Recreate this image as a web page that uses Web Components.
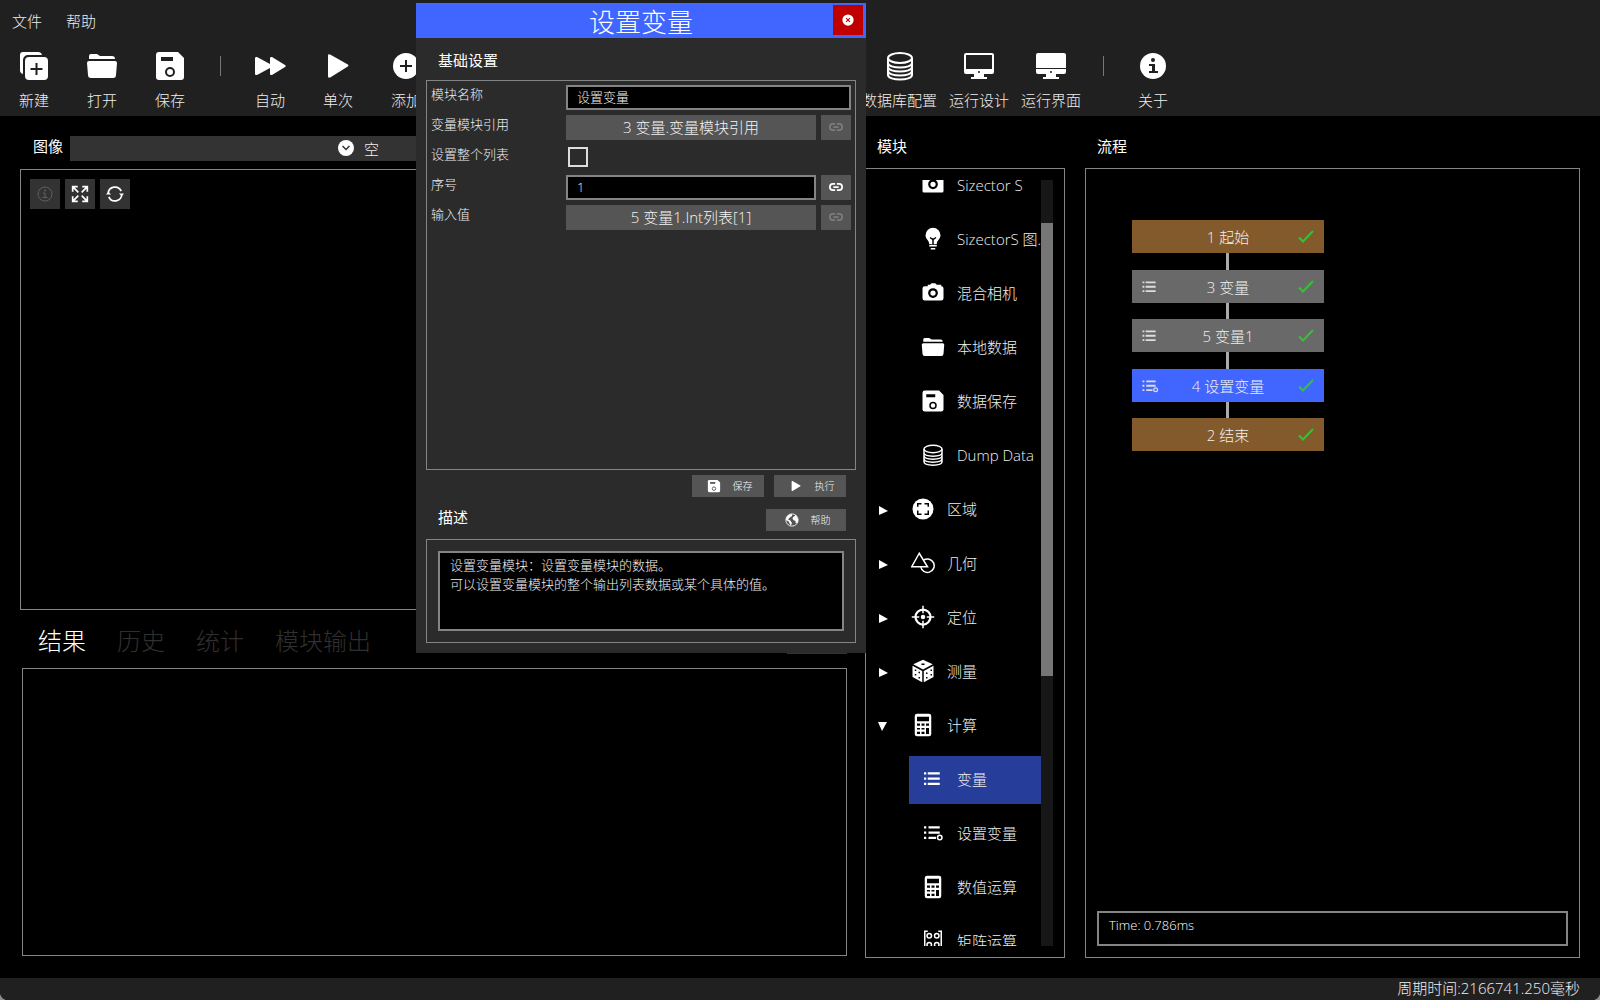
<!DOCTYPE html>
<html lang="zh-CN">
<head>
<meta charset="utf-8">
<title>设置变量</title>
<style>
  html, body {
    height: 100%;
    margin: 0;
    background: #8c8c98;
  }

  body {
    --bar: #202020;
    --line: #848484;
    --accent: #4066ff;
    --button: #555;
    color: #efefef;
    font: 300 15px/20px "Open Sans", "Noto Sans CJK SC", sans-serif;
  }
</style>
</head>
<body>

<app-shell>
  <menu-bar slot="top">
    <a href="#file">文件</a>
    <a href="#help">帮助</a>
  </menu-bar>
  <tool-bar slot="top">
    <tool-item icon="new">新建</tool-item>
    <tool-item icon="folder">打开</tool-item>
    <tool-item icon="save">保存</tool-item>
    <tool-separator></tool-separator>
    <tool-item icon="forward">自动</tool-item>
    <tool-item icon="play">单次</tool-item>
    <tool-item icon="add">添加</tool-item>
    <tool-separator wide></tool-separator>
    <tool-item icon="database">数据库配置</tool-item>
    <tool-item icon="monitor">运行设计</tool-item>
    <tool-item icon="screen">运行界面</tool-item>
    <tool-separator></tool-separator>
    <tool-item icon="info">关于</tool-item>
  </tool-bar>

  <image-view slot="left"></image-view>
  <result-view slot="left"></result-view>

  <module-list slot="modules">
    <module-item icon="cameraflat" child>Sizector S</module-item>
    <module-item icon="bulb" child>SizectorS 图.</module-item>
    <module-item icon="camera" child>混合相机</module-item>
    <module-item icon="folder" child>本地数据</module-item>
    <module-item icon="save" child>数据保存</module-item>
    <module-item icon="database" child>Dump Data</module-item>
    <module-item icon="region">区域</module-item>
    <module-item icon="geometry">几何</module-item>
    <module-item icon="locate">定位</module-item>
    <module-item icon="dice">测量</module-item>
    <module-item icon="calc" open>计算</module-item>
    <module-item icon="list" child selected>变量</module-item>
    <module-item icon="listset" child>设置变量</module-item>
    <module-item icon="calc" child>数值运算</module-item>
    <module-item icon="matrix" child>矩阵运算</module-item>
  </module-list>

  <flow-view slot="flow">
    <flow-node kind="end" style="top: 51px">1 起始</flow-node>
    <flow-node icon="list" style="top: 101px">3 变量</flow-node>
    <flow-node icon="list" style="top: 150px">5 变量1</flow-node>
    <flow-node icon="listset" kind="current" style="top: 200px">4 设置变量</flow-node>
    <flow-node kind="end" style="top: 249px">2 结束</flow-node>
  </flow-view>

  <status-bar slot="status">周期时间:2166741.250毫秒</status-bar>
</app-shell>

<settings-dialog heading="设置变量"></settings-dialog>

<script>
(() => {
  // 32x32 glyphs, --cut is the colour behind the icon
  const ICONS = {
    new: `<path d="M5 2h15a4 4 0 0 1 4 3H10a5 5 0 0 0-5 5v14a4 4 0 0 1-3-4V5a3 3 0 0 1 3-3z"/>
      <rect x="7" y="7" width="23" height="23" rx="4"/>
      <path class="cut-line" d="M18.500 13v12M12.500 19h12" stroke-width="2"/>`,
    folder: `<path d="M3 9V6a2 2 0 0 1 2-2h6l3 2h12a3 3 0 0 1 3 3z"/>
      <path d="M3 11h26a2 2 0 0 1 2 2l-1 12a3 3 0 0 1-3 3H5a3 3 0 0 1-3-3L1 13a2 2 0 0 1 2-2z"/>`,
    save: `<path d="M5 2h19l6 6v19a3 3 0 0 1-3 3H5a3 3 0 0 1-3-3V5a3 3 0 0 1 3-3z"/>
      <path class="cut" d="M7 7h12v4H7z"/><circle class="cut-line" cx="16" cy="22" r="4" stroke-width="2"/>`,
    forward: `<path d="M1 8c0-1 1-1 2-1l13 7V8c0-1 1-1 2-1l13 8c1 1 1 1 0 2l-13 8c-1 0-2 0-2-1v-6L3 25c-1 0-2 0-2-1z"/>`,
    play: `<path d="M6 6c0-2 1-2 3-1l16 9c2 1 2 2 0 3L9 27c-2 1-3 1-3-1z"/>`,
    add: `<circle cx="16" cy="16" r="13"/><path class="cut-line" d="M16 10v12M10 16h12" stroke-width="2"/>`,
    database: `<g class="line" stroke-width="2"><ellipse cx="16" cy="8" rx="12" ry="5"/>
      <path d="M4 8v17c0 6 24 6 24 0V8M4 13c0 6 24 6 24 0M4 17c0 6 24 6 24 0M4 21c0 6 24 6 24 0"/></g>`,
    monitor: `<path fill-rule="evenodd" d="M3 3h26a2 2 0 0 1 2 2v17a2 2 0 0 1-2 2H3a2 2 0 0 1-2-2V5a2 2 0 0 1 2-2zm0 2v14h26V5z"/>
      <path d="M11 24h10v3h3v2H8v-2h3z"/><circle class="cut" cx="16" cy="22" r="1"/>`,
    screen: `<path d="M3 3h26a2 2 0 0 1 2 2v17a2 2 0 0 1-2 2H3a2 2 0 0 1-2-2V5a2 2 0 0 1 2-2z"/>
      <path d="M11 24h10v3h3v2H8v-2h3z"/><path class="cut" d="M1 18h30v1H1z"/><circle class="cut" cx="16" cy="22" r="1"/>`,
    info: `<circle cx="16" cy="16" r="13"/><circle class="cut" cx="16" cy="10" r="2"/>
      <path class="cut" d="M12 14h6v7h3v2h-9v-2h3v-5h-3z"/>`,
    infoline: `<g class="line" stroke-width="2"><circle cx="16" cy="16" r="14"/><path d="M12 14h4v8M11 23h10"/></g>
      <circle cx="16" cy="9" r="2"/>`,
    expand: `<path class="line" stroke-width="3" d="M3 12V3h9M3 3l10 10M20 3h9v9M29 3L19 13M3 20v9h9M3 29l10-10M20 29h9v-9M29 29L19 19"/>`,
    refresh: `<path class="line" stroke-width="3" d="M4 15a12 12 0 0 1 23-4M28 17a12 12 0 0 1-23 4"/>
      <path d="M0 17l4-5 5 5zM23 15l5 5 4-5z"/>`,
    chevron: `<circle cx="16" cy="16" r="16"/><path class="cut-line" d="M9 12l7 7 7-7" stroke-width="3"/>`,
    close: `<circle cx="16" cy="16" r="15"/><path class="cut-line" d="M11 11l10 10M21 11L11 21" stroke-width="3"/>`,
    link: `<path class="line" stroke-width="4" d="M14 9H9a7 7 0 0 0 0 14h5M18 9h5a7 7 0 0 1 0 14h-5M10 16h12"/>`,
    globe: `<circle class="line" cx="16" cy="16" r="14" stroke-width="2"/>
      <path d="M16 2a14 14 0 0 0-14 14l6 3 2 4 3 6 3-6-4-6-5-2 4-5 5-3zM19 9l6-5 5 11-1 8-5-1v-4l-5-2-2-4z"/>`,
    camera: `<path d="M5 7h4V5h3l2-2h5l2 2h6v2a3 3 0 0 1 3 3v13a3 3 0 0 1-3 3H5a3 3 0 0 1-3-3V10a3 3 0 0 1 3-3z"/>
      <circle class="cut-line" cx="16" cy="16" r="5" stroke-width="3"/>`,
    cameraflat: `<path d="M4 5h24a2 2 0 0 1 2 2v17a2 2 0 0 1-2 2H4a2 2 0 0 1-2-2V7a2 2 0 0 1 2-2z"/>
      <circle class="cut-line" cx="16" cy="15" r="5" stroke-width="3"/>`,
    bulb: `<path d="M16 1a10 10 0 0 0-10 10c0 5 5 7 5 12h10c0-5 5-7 5-12A10 10 0 0 0 16 1zM11 24h10v2H11zM13 28h6v2h-6z"/>
      <path class="cut-line" d="M12 14l3 2h2l3-2M16 16v7" stroke-width="2"/>`,
    region: `<circle cx="16" cy="16" r="14"/>
      <path class="cut-line" d="M9 13v-4h5M18 9h5v4M23 18v5h-5M14 23H9v-5" stroke-width="2"/>`,
    geometry: `<g class="line" stroke-width="2"><path d="M11 3L1 21h21z"/><path d="M17 12a9 9 0 1 1-4 9"/></g>`,
    locate: `<g class="line"><circle cx="16" cy="16" r="10" stroke-width="3"/><path stroke-width="2" d="M16 1v10M16 21v10M1 16h10M21 16h10"/></g>
      <circle cx="16" cy="16" r="3"/>`,
    dice: `<path d="M16 1l13 6-13 7L3 7zM2 9l13 7v15L2 24zM30 9l-13 7v15l13-7z"/>
      <path class="cut" d="M14 6h4v2h-4zM5 14h2v2H5zM10 17h2v2h-2zM5 20h2v2H5zM10 24h2v2h-2zM20 18h2v2h-2zM26 14h2v2h-2zM20 24h2v2h-2zM26 20h2v2h-2z"/>`,
    calc: `<rect x="5" y="1" width="22" height="30" rx="3"/>
      <path class="cut" d="M8 5h16v6H8zM8 14h4v3H8zM14 14h4v3h-4zM20 14h4v3h-4zM8 20h4v2H8zM14 20h4v2h-4zM8 25h4v3H8zM14 25h4v3h-4zM20 20h4v8h-4z"/>`,
    list: `<path d="M4 7h3v3H4zM9 7h16v3H9zM4 14h3v3H4zM9 14h16v3H9zM4 21h3v3H4zM9 21h16v3H9z"/>`,
    listset: `<path d="M4 7h3v3H4zM10 7h15v3H10zM4 14h3v3H4zM10 14h15v3H10zM4 21h3v3H4zM10 21h10v3H10z"/>
      <circle class="line" cx="25" cy="22" r="3" stroke-width="2"/>`,
    matrix: `<g class="line" stroke-width="2"><path d="M9 3H5v26h4M23 3h4v26h-4"/>
      <circle cx="11" cy="9" r="3"/><circle cx="21" cy="9" r="3"/><circle cx="11" cy="21" r="3"/><circle cx="21" cy="21" r="3"/></g>`,
    check: `<path class="line" stroke-width="4" d="M2 17l8 8L30 4"/>`,
  };

  const attach = (host, html) => {
    const template = document.createElement('template');
    template.innerHTML = html;
    host.attachShadow({mode: 'open'}).appendChild(template.content);
    return host.shadowRoot;
  };

  class AppIcon extends HTMLElement {
    connectedCallback() {
      if (this.shadowRoot) return;
      attach(this, `
        <style>
          :host { display: inline-block; flex: none; width: 32px; height: 32px; color: #fff; }
          svg { display: block; width: 100%; height: 100%; fill: currentColor; }
          .line { fill: none; stroke: currentColor; }
          .cut { fill: var(--cut, #000); }
          .cut-line { fill: none; stroke: var(--cut, #000); }
        </style>
        <svg viewBox="0 0 32 32" aria-hidden="true">${ICONS[this.getAttribute('name')] || ''}</svg>
      `);
    }
  }

  class AppShell extends HTMLElement {
    constructor() {
      super();
      attach(this, `
        <style>
          :host {
            display: flex;
            flex-direction: column;
            height: 100vh;
            overflow: hidden;
            border-radius: 0 0 8px 8px;
            background: #000;
          }
          header { flex: none; height: 116px; background: var(--bar); }
          main {
            flex: 1;
            min-height: 0;
            display: grid;
            grid-template-columns: minmax(0, 827px) 200px minmax(0, 1fr);
            column-gap: 18px;
            padding: 0 20px 20px;
          }
          .left { display: flex; flex-direction: column; min-height: 0; padding-bottom: 2px; }
          .modules, .flow { min-height: 0; }
          .flow { margin-left: 2px; }
        </style>
        <header><slot name="top"></slot></header>
        <main>
          <div class="left"><slot name="left"></slot></div>
          <div class="modules"><slot name="modules"></slot></div>
          <div class="flow"><slot name="flow"></slot></div>
        </main>
        <slot name="status"></slot>
      `);
    }
  }

  class MenuBar extends HTMLElement {
    constructor() {
      super();
      attach(this, `
        <style>
          :host { display: flex; gap: 24px; padding: 11px 12px; }
          ::slotted(a) { color: inherit; text-decoration: none; }
        </style>
        <slot></slot>
      `);
    }
  }

  class ToolBar extends HTMLElement {
    constructor() {
      super();
      attach(this, `
        <style>:host { display: flex; padding-top: 8px; --cut: var(--bar); }</style>
        <slot></slot>
      `);
    }
  }

  class ToolItem extends HTMLElement {
    constructor() {
      super();
      attach(this, `
        <style>
          :host { display: block; flex: none; }
          button {
            display: flex;
            flex-direction: column;
            align-items: center;
            gap: 8px;
            min-width: 68px;
            padding: 0 6px;
            border: 0;
            background: none;
            color: inherit;
            font: inherit;
            white-space: nowrap;
          }
        </style>
        <button type="button"><app-icon name="${this.getAttribute('icon')}"></app-icon><slot></slot></button>
      `);
    }
  }

  class ToolSeparator extends HTMLElement {
    constructor() {
      super();
      attach(this, `
        <style>
          :host { flex: none; width: 1px; height: 20px; margin: 6px 15px 0 16px; background: #777; }
          :host([wide]) { width: 416px; margin: 0; background: none; }
        </style>
      `);
    }
  }

  class ImageView extends HTMLElement {
    constructor() {
      super();
      attach(this, `
        <style>
          :host { flex: 494 1 0; display: flex; flex-direction: column; min-height: 0; }
          .head { display: flex; height: 25px; padding: 20px 0 8px 13px; }
          label { width: 37px; font-weight: 400; color: #fff; }
          .source { flex: 1; display: flex; align-items: center; height: 25px; background: #333; --cut: #333; }
          .pick { position: relative; width: 284px; height: 25px; }
          select { width: 100%; height: 100%; border: 0; appearance: none; background: none; color: inherit; font: inherit; }
          .pick app-icon { position: absolute; right: 0; top: 4px; width: 16px; height: 16px; pointer-events: none; }
          output { padding-left: 10px; }
          .view { flex: 1; display: flex; gap: 5px; align-items: flex-start; padding: 9px; border: 1px solid var(--line); }
          button { display: grid; place-items: center; width: 30px; height: 30px; padding: 0; border: 0; background: #333; }
          button app-icon { width: 18px; height: 18px; }
          button:disabled app-icon { color: #606060; width: 16px; height: 16px; }
        </style>
        <div class="head">
          <label for="source">图像</label>
          <div class="source">
            <span class="pick"><select id="source"><option></option></select><app-icon name="chevron"></app-icon></span>
            <output for="source">空</output>
          </div>
        </div>
        <div class="view">
          <button type="button" disabled aria-label="信息"><app-icon name="infoline"></app-icon></button>
          <button type="button" aria-label="适应"><app-icon name="expand"></app-icon></button>
          <button type="button" aria-label="刷新"><app-icon name="refresh"></app-icon></button>
        </div>
      `);
    }
  }

  class ResultView extends HTMLElement {
    constructor() {
      super();
      attach(this, `
        <style>
          :host { flex: 346 1 0; display: flex; flex-direction: column; min-height: 0; padding-left: 2px; }
          nav { display: flex; gap: 31px; height: 58px; padding: 3px 0 0 16px; align-items: center; box-sizing: border-box; }
          nav button { padding: 0; border: 0; background: none; font: inherit; font-size: 24px; line-height: 36px; color: #303030; }
          nav button[aria-selected=true] { color: #fff; }
          nav .clear { align-self: flex-start; width: 60px; height: 41px; margin-left: auto; background: #333; }
          .page { flex: 1; border: 1px solid var(--line); }
        </style>
        <nav role="tablist">
          <button type="button" role="tab" aria-selected="true">结果</button>
          <button type="button" role="tab">历史</button>
          <button type="button" role="tab">统计</button>
          <button type="button" role="tab">模块输出</button>
          <button type="button" class="clear" aria-label="清空"></button>
        </nav>
        <div class="page"></div>
      `);
    }
  }

  class ModuleList extends HTMLElement {
    constructor() {
      super();
      attach(this, `
        <style>
          :host { display: flex; flex-direction: column; height: 100%; }
          h2 { margin: 0; padding: 20px 0 12px 12px; font-size: 15px; line-height: 20px; font-weight: 400; color: #fff; }
          .panel { flex: 1; display: flex; min-height: 0; padding: 11px 11px 11px 0; border: 1px solid var(--line); }
          .rows { flex: 1; display: flex; flex-direction: column; gap: 6px; min-width: 0; overflow: hidden; }
          .track { display: flex; flex-direction: column; width: 12px; background: #171717; }
          .track::before { content: ''; flex: 43; }
          .track::after { content: ''; flex: 270; }
          .thumb { flex: 453; background: #767676; }
        </style>
        <h2>模块</h2>
        <div class="panel">
          <div class="rows"><slot></slot></div>
          <div class="track"><div class="thumb"></div></div>
        </div>
      `);
    }

    connectedCallback() {
      this.shadowRoot.querySelector('.rows').scrollTop = 18;
    }
  }

  class ModuleItem extends HTMLElement {
    constructor() {
      super();
      attach(this, `
        <style>
          :host {
            flex: none;
            display: flex;
            align-items: center;
            height: 48px;
            margin-left: 12px;
            padding-bottom: 2px;
            box-sizing: border-box;
            white-space: nowrap;
          }
          :host([child]) { margin-left: 43px; padding-left: 12px; }
          :host([selected]) { background: #263d99; }
          :host(:not([child]))::before { content: ''; width: 33px; height: 12px; background: #fff; clip-path: polygon(1px 3px, 10px 8px, 1px 12px); }
          :host([open])::before { clip-path: polygon(0 3px, 9px 3px, 4px 12px) !important; }
          app-icon { width: 24px; height: 24px; }
          span { margin-left: 12px; }
        </style>
        <app-icon name="${this.getAttribute('icon')}"></app-icon><span><slot></slot></span>
      `);
    }
  }

  class FlowView extends HTMLElement {
    constructor() {
      super();
      attach(this, `
        <style>
          :host { display: flex; flex-direction: column; height: 100%; }
          h2 { margin: 0; padding: 20px 0 12px 12px; font-size: 15px; line-height: 20px; font-weight: 400; color: #fff; }
          .panel { flex: 1; display: flex; flex-direction: column; padding: 0 11px 11px; border: 1px solid var(--line); }
          .canvas { position: relative; flex: 1; }
          .wire { position: absolute; left: 129px; top: 60px; width: 3px; height: 200px; background: #aaa; }
          .time { height: 31px; border: 2px solid var(--line); padding-left: 10px; font-size: 13px; line-height: 25px; color: #fff; }
        </style>
        <h2>流程</h2>
        <div class="panel">
          <div class="canvas"><div class="wire"></div><slot></slot></div>
          <div class="time">Time: 0.786ms</div>
        </div>
      `);
    }
  }

  class FlowNode extends HTMLElement {
    constructor() {
      super();
      attach(this, `
        <style>
          :host {
            position: absolute;
            left: 35px;
            display: grid;
            grid-template-columns: 22px 1fr 22px;
            align-items: center;
            justify-items: center;
            width: 192px;
            height: 33px;
            padding: 0 7px;
            box-sizing: border-box;
            background: #696969;
            --cut: #696969;
          }
          :host([kind=end]) { background: #835a2c; }
          :host([kind=current]) { background: var(--accent); }
          app-icon { width: 20px; height: 20px; color: #ddd; }
          app-icon:last-child { width: 16px; height: 16px; color: #34c234; }
        </style>
        <app-icon name="${this.getAttribute('icon')}"></app-icon><span><slot></slot></span><app-icon name="check"></app-icon>
      `);
    }
  }

  class StatusBar extends HTMLElement {
    constructor() {
      super();
      attach(this, `
        <style>:host { flex: none; display: block; height: 22px; padding-right: 20px; background: var(--bar); text-align: right; line-height: 20px; }</style>
        <slot></slot>
      `);
    }
  }

  class SettingsDialog extends HTMLElement {
    constructor() {
      super();
      attach(this, `
        <style>
          :host {
            position: absolute;
            left: 26%;
            top: 3px;
            width: 450px;
            padding-bottom: 10px;
            background: #2b2b2b;
          }
          header { display: grid; grid-template-columns: 30px 1fr 30px; padding: 2px 3px; height: 31px; background: var(--accent); }
          h1 { grid-column: 2; margin: 0; font-size: 26px; line-height: 34px; font-weight: 300; text-align: center; color: #fff; }
          h2 { margin: 0; font-size: 15px; line-height: 16px; font-weight: 400; color: #fff; }
          button, input, textarea { box-sizing: border-box; margin: 0; border: 0; border-radius: 0; color: #f4f4f4; font: inherit; }
          button { display: flex; align-items: center; justify-content: center; padding: 0; background: var(--button); --cut: var(--button); }
          .close { width: 30px; height: 30px; background: #c00000; --cut: #c00000; }
          .close app-icon { width: 12px; height: 12px; }
          .title { padding: 14px 22px 12px; }
          .box { margin: 0 10px; border: 1px solid var(--line); }
          form { display: flex; flex-direction: column; gap: 5px; height: 380px; padding: 4px; }
          .row { display: grid; grid-template-columns: 135px 1fr 30px; height: 25px; }
          .row label { font-size: 13px; line-height: 18px; }
          .row .wide { grid-column: 2 / 4; }
          .row .value { margin-right: 5px; }
          .row .ref { height: 25px; padding-bottom: 1px; }
          input[type=text], textarea { border: 2px solid var(--line); background: #000; font-size: 13px; padding: 0 9px 2px; height: 25px; min-width: 0; }
          input[type=checkbox] { width: 20px; height: 20px; margin: 2px; appearance: none; border: 2px solid #ddd; }
          .link { width: 30px; height: 25px; padding-bottom: 1px; }
          .link app-icon { width: 14px; height: 14px; }
          .link:disabled app-icon { color: #7c7c7c; }
          .actions { display: flex; justify-content: flex-end; gap: 10px; padding: 5px 20px 0; }
          .small { gap: 12px; width: 72px; height: 22px; padding-left: 3px; font-size: 10px; }
          .small app-icon { width: 14px; height: 14px; }
          .describe { display: flex; align-items: flex-start; justify-content: space-between; padding: 12px 20px 8px 22px; }
          .describe .small { width: 80px; }
          .note { display: flex; padding: 11px; }
          textarea { flex: 1; height: 80px; padding: 3px 10px; line-height: 19px; resize: none; }
        </style>
        <header>
          <h1>${this.getAttribute('heading')}</h1>
          <button type="button" class="close" aria-label="关闭"><app-icon name="close"></app-icon></button>
        </header>
        <h2 class="title">基础设置</h2>
        <form class="box">
          <div class="row">
            <label for="name">模块名称</label>
            <input class="wide" id="name" type="text" value="设置变量">
          </div>
          <div class="row">
            <label for="ref">变量模块引用</label>
            <button type="button" class="value ref" id="ref">3 变量.变量模块引用</button>
            <button type="button" class="link" disabled aria-label="链接"><app-icon name="link"></app-icon></button>
          </div>
          <div class="row">
            <label for="whole">设置整个列表</label>
            <input id="whole" type="checkbox">
          </div>
          <div class="row">
            <label for="index">序号</label>
            <input class="value" id="index" type="text" value="1">
            <button type="button" class="link" aria-label="链接"><app-icon name="link"></app-icon></button>
          </div>
          <div class="row">
            <label for="input">输入值</label>
            <button type="button" class="value ref" id="input">5 变量1.Int列表[1]</button>
            <button type="button" class="link" disabled aria-label="链接"><app-icon name="link"></app-icon></button>
          </div>
        </form>
        <div class="actions">
          <button type="button" class="small"><app-icon name="save"></app-icon>保存</button>
          <button type="button" class="small"><app-icon name="play"></app-icon>执行</button>
        </div>
        <div class="describe">
          <h2 id="describe">描述</h2>
          <button type="button" class="small"><app-icon name="globe"></app-icon>帮助</button>
        </div>
        <div class="box note">
          <textarea readonly aria-labelledby="describe">设置变量模块：设置变量模块的数据。
可以设置变量模块的整个输出列表数据或某个具体的值。</textarea>
        </div>
      `);
    }
  }

  window.customElements.define('app-icon', AppIcon);
  window.customElements.define('app-shell', AppShell);
  window.customElements.define('menu-bar', MenuBar);
  window.customElements.define('tool-bar', ToolBar);
  window.customElements.define('tool-item', ToolItem);
  window.customElements.define('tool-separator', ToolSeparator);
  window.customElements.define('image-view', ImageView);
  window.customElements.define('result-view', ResultView);
  window.customElements.define('module-item', ModuleItem);
  window.customElements.define('module-list', ModuleList);
  window.customElements.define('flow-view', FlowView);
  window.customElements.define('flow-node', FlowNode);
  window.customElements.define('status-bar', StatusBar);
  window.customElements.define('settings-dialog', SettingsDialog);
})();
</script>
</body>
</html>
